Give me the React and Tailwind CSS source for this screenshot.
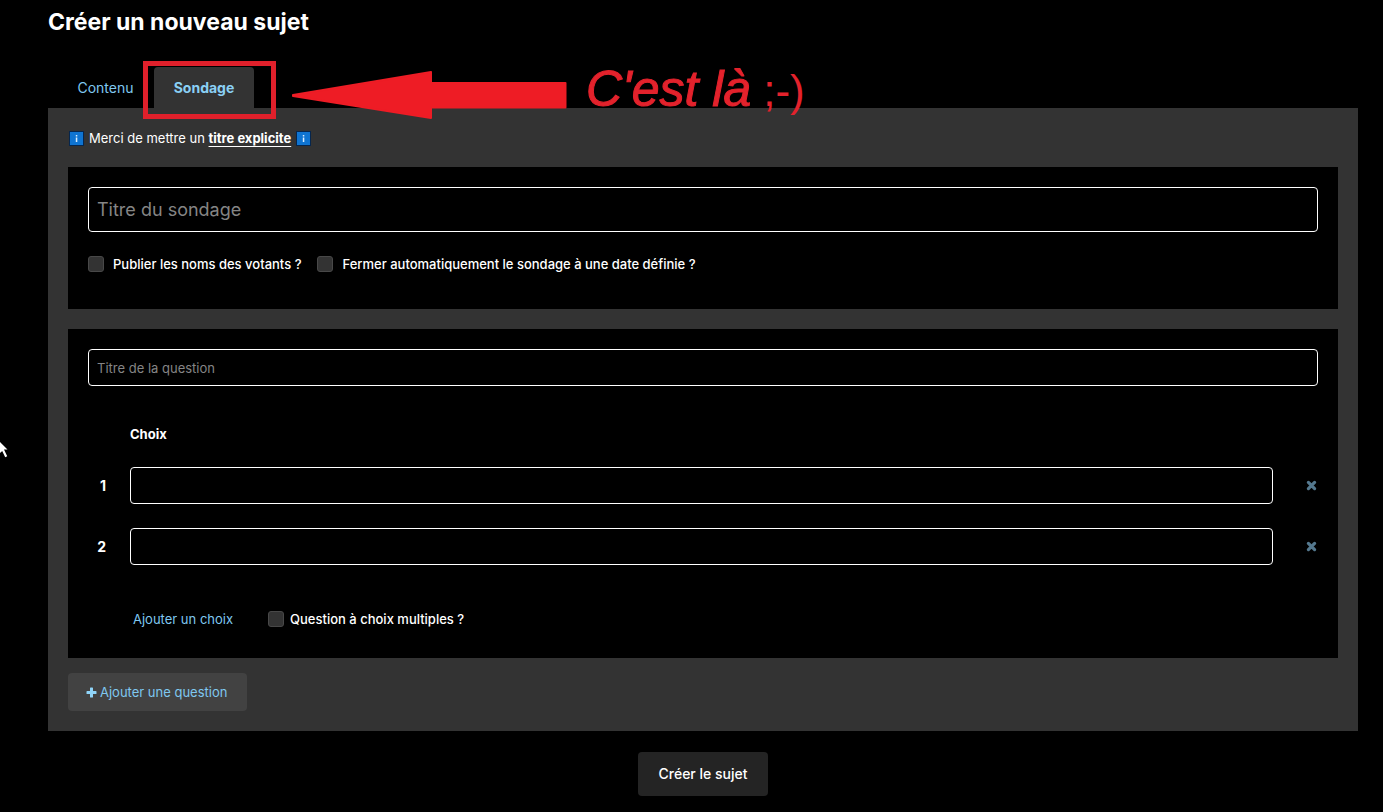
function Check({ id, label, gap }) {
  return (
    <div className={`flex items-center ${gap}`}>
      <input
        id={id}
        type="checkbox"
        className="size-4 shrink-0 appearance-none rounded-[3px] border border-[#484848] bg-[#333333] checked:bg-[#7fd0f7]"
      />
      <label htmlFor={id} className="text-[13px] leading-5 font-medium text-white">
        {label}
      </label>
    </div>
  );
}

function InfoBadge() {
  return (
    <svg viewBox="0 0 15 15" className="size-[15px] shrink-0" role="img" aria-label="Information">
      <rect width="15" height="15" fill="#06264d" />
      <rect x="1" y="1" width="13" height="13" fill="#0f74d1" />
      <rect x="6.800" y="4" width="1.500" height="1.500" fill="#d9edff" />
      <rect x="6.800" y="6.500" width="1.500" height="4.500" fill="#d9edff" />
    </svg>
  );
}

function PlusIcon() {
  return (
    <svg viewBox="0 0 11 11" className="size-[11px] shrink-0" aria-hidden="true">
      <path
        d="M4.600 0.500h1.800a.6.6 0 0 1 .6.6V4h2.900a.6.6 0 0 1 .6.6v1.800a.6.6 0 0 1-.6.6H7v2.900a.6.6 0 0 1-.6.6H4.600a.6.6 0 0 1-.6-.6V7H1.100a.6.6 0 0 1-.6-.6V4.600a.6.6 0 0 1 .6-.6H4V1.100a.6.6 0 0 1 .6-.6Z"
        fill="#8fd4f8"
      />
    </svg>
  );
}

function CrossIcon() {
  return (
    <svg viewBox="0 0 11 11" className="size-[11px]" aria-hidden="true">
      <path d="M2.400 2.400 8.600 8.600M8.600 2.400 2.400 8.600" stroke="currentColor" strokeWidth="3.200" strokeLinecap="round" />
    </svg>
  );
}

function Choice({ n }) {
  return (
    <div className="flex items-center">
      <label htmlFor={`choice-${n}`} className="w-[18px] text-right text-sm leading-5 font-bold">
        {n}
      </label>
      <input
        id={`choice-${n}`}
        type="text"
        className="ml-6 h-[37px] min-w-0 flex-1 rounded-[4px] border border-white bg-black px-2 text-[13px] text-white"
      />
      <button type="button" aria-label="Supprimer" className="ml-8 flex w-[13px] justify-center text-[#54788e]">
        <CrossIcon />
      </button>
    </div>
  );
}

function Annotations() {
  return (
    <>
      <div className="pointer-events-none absolute top-[61px] left-[143px] h-[58px] w-[133px] border-5 border-[#e0202b]" />
      <svg viewBox="0 0 276 48" className="pointer-events-none absolute top-[71px] left-[292px] h-12 w-[276px]" aria-hidden="true">
        <path
          d="M1 24 139 1V12H273.500V36.500H139V47L1 25Z"
          fill="#ee1c25"
          stroke="#ee1c25"
          strokeWidth="2"
          strokeLinejoin="round"
        />
      </svg>
      <p className="pointer-events-none absolute top-[62px] left-[586px] flex items-baseline gap-3 font-['Liberation_Sans',Arial,sans-serif] text-[50px] leading-[54px] whitespace-nowrap text-[#e3222c]">
        <span className="italic [-webkit-text-stroke:1px_#e3222c]">C'est là</span>
        <span className="text-[44px]">;-)</span>
      </p>
      <svg viewBox="0 0 9 18" className="pointer-events-none absolute top-[441px] left-0 h-[18px] w-[9px]" aria-hidden="true">
        <path d="M0 1 7.500 8.500H4L7.200 15.200 5.200 16.200 2.200 10 0 12Z" fill="#fff" />
      </svg>
    </>
  );
}

export default function App() {
  return (
    <div className="relative min-h-screen bg-black pt-1.5 pr-[25px] pb-4 pl-12 font-['Inter',sans-serif] text-[13px] leading-5 text-white">
      <h1 className="text-[23px] leading-8 font-bold">Créer un nouveau sujet</h1>

      <div role="tablist" className="mt-[29px] flex h-[41px] items-stretch pl-1.5">
        <button type="button" role="tab" aria-selected="false" className="w-[100px] pl-[3px] text-sm text-[#7fc8f0]">
          Contenu
        </button>
        <button
          type="button"
          role="tab"
          aria-selected="true"
          className="w-[100px] rounded-t-[4px] bg-[#333333] text-sm font-bold text-[#8ad0f5]"
        >
          Sondage
        </button>
      </div>

      <main className="bg-[#333333] p-5">
        <p className="flex h-5 items-center gap-[5px] pl-px">
          <InfoBadge />
          <span>
            Merci de mettre un{" "}
            <strong className="font-bold underline underline-offset-3">titre explicite</strong>
          </span>
          <InfoBadge />
        </p>

        <section className="mt-[19px] bg-black px-5 pt-5 pb-[35px]">
          <input
            type="text"
            aria-label="Titre du sondage"
            placeholder="Titre du sondage"
            className="block h-[45px] w-full rounded-[4px] border border-white bg-black px-2 text-lg placeholder:text-[#858585]"
          />
          <div className="mt-[22px] flex flex-wrap gap-4">
            <Check id="public" label="Publier les noms des votants ?" gap="gap-[9px]" />
            <Check id="auto-close" label="Fermer automatiquement le sondage à une date définie ?" gap="gap-[9px]" />
          </div>
        </section>

        <section className="mt-5 bg-black px-5 pt-5 pb-[29px]">
          <input
            type="text"
            aria-label="Titre de la question"
            placeholder="Titre de la question"
            className="block h-[37px] w-full rounded-[4px] border border-white bg-black px-2 text-[13px] placeholder:text-[#858585]"
          />
          <h2 className="mt-[38px] pl-[42px] font-bold">Choix</h2>
          <div className="mt-[23px] flex flex-col gap-6">
            <Choice n={1} />
            <Choice n={2} />
          </div>
          <div className="mt-11 flex items-center gap-[35px] pl-[45px]">
            <button type="button" className="text-[#7fc8f0]">
              Ajouter un choix
            </button>
            <Check id="multiple" label="Question à choix multiples ?" gap="gap-1.5" />
          </div>
        </section>

        <button
          type="button"
          className="mt-[15px] flex h-[38px] items-center gap-[3px] rounded-[4px] bg-[#424242] pr-5 pl-[18px] text-[#7fc8f0]"
        >
          <PlusIcon />
          Ajouter une question
        </button>
      </main>

      <div className="mt-[21px] flex justify-center">
        <button type="button" className="h-11 rounded-[4px] bg-[#242424] px-[21px] text-sm font-medium">
          Créer le sujet
        </button>
      </div>

      <Annotations />
    </div>
  );
}
